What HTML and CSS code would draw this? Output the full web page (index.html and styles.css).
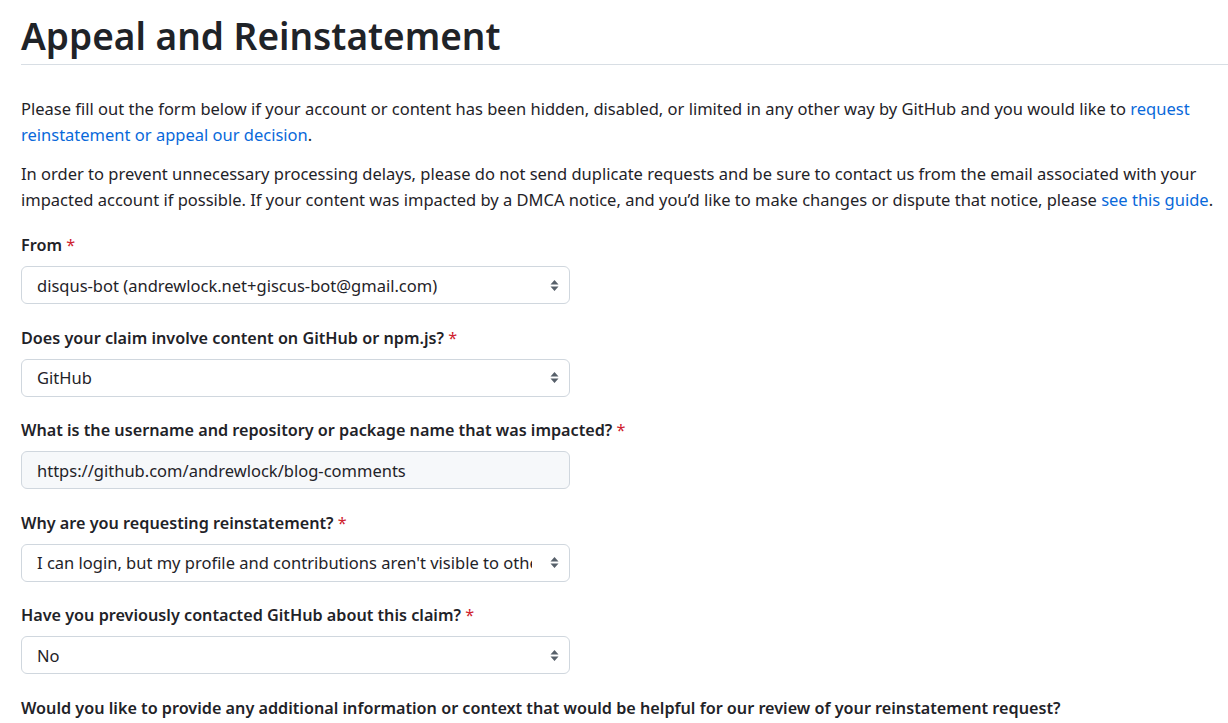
FILE: index.html
```html
<!DOCTYPE html>
<html lang="en">
<head>
<meta charset="utf-8">
<title>Appeal and Reinstatement</title>
<link rel="stylesheet" href="styles.css">
</head>
<body>
<main class="page">
  <h1 class="title">Appeal and Reinstatement</h1>
  <div class="intro">
    <p>Please fill out the form below if your account or content has been hidden, disabled, or limited in any other way by GitHub and you would like to <a href="#">request reinstatement or appeal our decision</a>.</p>
    <p>In order to prevent unnecessary processing delays, please do not send duplicate requests and be sure to contact us from the email associated with your impacted account if possible. If your content was impacted by a DMCA notice, and you’d like to make changes or dispute that notice, please <a href="#">see this guide</a>.</p>
  </div>
  <form class="form">
    <div class="group">
      <label class="label">From <span class="req">*</span></label>
      <div class="control select"><span class="value">disqus-bot (andrewlock.net+giscus-bot@gmail.com)</span><svg class="caret" viewBox="0 0 9 13" width="9" height="13"><path d="M4.5 1 L8.5 5.5 H0.5 Z M4.5 12 L0.5 7.5 H8.5 Z" fill="#57606a"/></svg></div>
    </div>
    <div class="group">
      <label class="label">Does your claim involve content on GitHub or npm.js? <span class="req">*</span></label>
      <div class="control select"><span class="value">GitHub</span><svg class="caret" viewBox="0 0 9 13" width="9" height="13"><path d="M4.5 1 L8.5 5.5 H0.5 Z M4.5 12 L0.5 7.5 H8.5 Z" fill="#57606a"/></svg></div>
    </div>
    <div class="group">
      <label class="label">What is the username and repository or package name that was impacted? <span class="req">*</span></label>
      <div class="control input"><span class="value">https://github.com/andrewlock/blog-comments</span></div>
    </div>
    <div class="group">
      <label class="label">Why are you requesting reinstatement? <span class="req">*</span></label>
      <div class="control select"><span class="value clip">I can login, but my profile and contributions aren't visible to others</span><svg class="caret" viewBox="0 0 9 13" width="9" height="13"><path d="M4.5 1 L8.5 5.5 H0.5 Z M4.5 12 L0.5 7.5 H8.5 Z" fill="#57606a"/></svg></div>
    </div>
    <div class="group">
      <label class="label">Have you previously contacted GitHub about this claim? <span class="req">*</span></label>
      <div class="control select"><span class="value">No</span><svg class="caret" viewBox="0 0 9 13" width="9" height="13"><path d="M4.5 1 L8.5 5.5 H0.5 Z M4.5 12 L0.5 7.5 H8.5 Z" fill="#57606a"/></svg></div>
    </div>
    <div class="group">
      <label class="label">Would you like to provide any additional information or context that would be helpful for our review of your reinstatement request?</label>
    </div>
  </form>
</main>
</body>
</html>
```
FILE: styles.css
```css
html, body {
  margin: 0;
  padding: 0;
  background: #ffffff;
}
body {
  font-family: "Noto Sans", "Open Sans", sans-serif;
  color: #1f2328;
  font-size: 16.5px;
  overflow: hidden;
}
.page {
  padding: 12px 0 0 21px;
}
.title {
  margin: 0;
  font-size: 37px;
  font-weight: 600;
  line-height: 48px;
  padding-bottom: 4px;
  border-bottom: 1px solid #d8dee4;
}
.intro {
  margin-top: 31px;
  padding-right: 8px;
}
.intro p {
  margin: 0 0 13px;
  line-height: 26px;
}
a {
  color: #0969da;
  text-decoration: none;
}
.form {
  margin-top: 20px;
}
.group {
  margin-bottom: 21.5px;
}
.label {
  display: block;
  font-size: 16.2px;
  font-weight: 600;
  line-height: 24px;
  margin-bottom: 9px;
}
.req {
  color: #cf222e;
  font-weight: 400;
}
.control {
  box-sizing: border-box;
  width: 549px;
  height: 38px;
  border: 1px solid #d0d7de;
  border-radius: 6px;
  display: flex;
  align-items: center;
  padding: 0 10px 0 15px;
  background: #ffffff;
}
.input {
  background: #f6f8fa;
}
.value {
  flex: 1;
  white-space: nowrap;
  overflow: hidden;
}
.clip {
  margin-right: 12px;
}
.caret {
  flex: none;
  margin-left: 6px;
}
```
